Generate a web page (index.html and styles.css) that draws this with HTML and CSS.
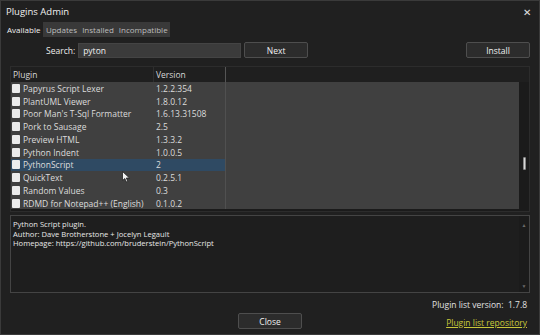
FILE: index.html
```html
<!DOCTYPE html>
<html lang="en">
<head>
    <meta charset="UTF-8">
    <title>Plugins Admin</title>
    <link rel="stylesheet" href="styles.css">
</head>
<body>
    <div class="window">
        <div class="titlebar">
            <span class="title">Plugins Admin</span>
            <span class="close-x">✕</span>
        </div>

        <div class="tabs">
            <span class="tab active">Available</span>
            <div class="tab-strip">
                <span class="tab">Updates</span>
                <span class="tab">Installed</span>
                <span class="tab">Incompatible</span>
            </div>
        </div>

        <div class="search-row">
            <label class="search-label">Search:</label>
            <div class="search-input">pyton</div>
            <button class="btn next-btn">Next</button>
            <div class="spacer"></div>
            <button class="btn install-btn">Install</button>
        </div>

        <div class="list-frame">
            <div class="list-head">
                <div class="col-name">Plugin</div>
                <div class="col-ver">Version</div>
                <div class="col-rest"></div>
            </div>
            <div class="list-body">
                <div class="rows">
                    <div class="row"><span class="col-name"><i class="check"></i>Papyrus Script Lexer</span><span class="col-ver">1.2.2.354</span><span class="col-rest"></span></div>
                    <div class="row"><span class="col-name"><i class="check"></i>PlantUML Viewer</span><span class="col-ver">1.8.0.12</span><span class="col-rest"></span></div>
                    <div class="row"><span class="col-name"><i class="check"></i>Poor Man's T-Sql Formatter</span><span class="col-ver">1.6.13.31508</span><span class="col-rest"></span></div>
                    <div class="row"><span class="col-name"><i class="check"></i>Pork to Sausage</span><span class="col-ver">2.5</span><span class="col-rest"></span></div>
                    <div class="row"><span class="col-name"><i class="check"></i>Preview HTML</span><span class="col-ver">1.3.3.2</span><span class="col-rest"></span></div>
                    <div class="row"><span class="col-name"><i class="check"></i>Python Indent</span><span class="col-ver">1.0.0.5</span><span class="col-rest"></span></div>
                    <div class="row selected"><span class="col-name"><i class="check"></i>PythonScript</span><span class="col-ver">2</span><span class="col-rest"></span></div>
                    <div class="row"><span class="col-name"><i class="check"></i>QuickText</span><span class="col-ver">0.2.5.1</span><span class="col-rest"></span></div>
                    <div class="row"><span class="col-name"><i class="check"></i>Random Values</span><span class="col-ver">0.3</span><span class="col-rest"></span></div>
                    <div class="row"><span class="col-name"><i class="check"></i>RDMD for Notepad++ (English)</span><span class="col-ver">0.1.0.2</span><span class="col-rest"></span></div>
                </div>
                <div class="vscroll">
                    <div class="thumb"></div>
                </div>
                <!-- mouse pointer over the list -->
                <svg class="cursor" width="9" height="12" viewBox="0 0 9 12">
                    <path d="M0.5 0.5 L0.5 9.5 L2.8 7.5 L4.4 11 L5.8 10.4 L4.3 7 L7.5 7 Z" fill="#f2f2f2" stroke="#222" stroke-width="0.8"/>
                </svg>
            </div>
        </div>

        <div class="desc-box">
            <div class="desc-text">
                Python Script plugin.<br>
                Author: Dave Brotherstone + Jocelyn Legault<br>
                Homepage: https://github.com/bruderstein/PythonScript
            </div>
            <div class="desc-scroll">
                <span class="arrow">▲</span>
                <span class="arrow">▼</span>
            </div>
        </div>

        <div class="footer">
            <div class="version-line">Plugin list version:&nbsp;&nbsp;1.7.8</div>
            <div class="footer-row">
                <button class="btn close-btn">Close</button>
                <a class="repo-link" href="#">Plugin list repository</a>
            </div>
        </div>
    </div>
</body>
</html>
```

FILE: styles.css
```css
* {
    margin: 0;
    padding: 0;
    box-sizing: border-box;
}

body {
    font-family: 'Open Sans', 'Noto Sans', 'Liberation Sans', sans-serif;
    background: #202020;
    color: #e6e6e6;
    width: 540px;
    height: 335px;
    overflow: hidden;
}

.window {
    width: 540px;
    height: 335px;
    background: #202020;
    border: 1px solid #3a3a3a;
    display: flex;
    flex-direction: column;
}

.titlebar {
    height: 21px;
    display: flex;
    align-items: center;
    justify-content: space-between;
    padding: 0 8px 0 5px;
}

.title {
    font-size: 9.5px;
    color: #f0f0f0;
}

.close-x {
    font-size: 10px;
    color: #e0e0e0;
}

.tabs {
    display: flex;
    height: 15px;
    padding-left: 5px;
    font-size: 8px;
}

.tab {
    display: flex;
    align-items: center;
    padding: 0 2.5px;
    color: #bdbdbd;
}

.tab.active {
    color: #f2f2f2;
    padding: 0 3px 0 1px;
}

.tab-strip {
    display: flex;
    background: #393939;
}

.search-row {
    display: flex;
    align-items: center;
    height: 16px;
    margin-top: 5px;
    padding: 0 9px 0 45px;
    font-size: 8.5px;
}

.search-label {
    margin-right: 3px;
    color: #ececec;
}

.search-input {
    width: 163px;
    height: 15px;
    background: #3b3b3b;
    border: 1px solid #444;
    padding: 0 4px;
    line-height: 13px;
    color: #f0f0f0;
}

.btn {
    font-family: inherit;
    background: #2c2c2c;
    border: 1px solid #4e4e4e;
    border-radius: 2px;
    color: #f0f0f0;
    font-size: 8.5px;
    height: 16px;
    width: 64px;
}

.next-btn {
    margin-left: 3px;
}

.spacer {
    flex: 1;
}

.list-frame {
    margin: 8px 9px 0 9px;
    height: 146px;
    background: #1b1b1b;
    border: 1px solid #2c2c2c;
    display: flex;
    flex-direction: column;
    font-size: 8.5px;
}

.list-head {
    height: 15px;
    flex: none;
    display: flex;
    align-items: center;
    color: #d6d6d6;
    background: #1f1f1f;
}

.col-name {
    width: 143px;
    padding-left: 2px;
    display: flex;
    align-items: center;
    height: 100%;
    border-right: 1px solid #2e2e2e;
}

.col-ver {
    width: 72px;
    padding-left: 2px;
    display: flex;
    align-items: center;
    height: 100%;
    border-right: 1px solid #555;
}

.col-rest {
    flex: 1;
    height: 100%;
}

.list-body {
    position: relative;
    flex: 1;
    display: flex;
    padding-bottom: 2px;
    overflow: hidden;
}

.rows {
    width: 508px;
    background: #404040;
    overflow: hidden;
}

.row {
    height: 12.75px;
    display: flex;
    align-items: center;
    color: #dcdcdc;
}

.row .col-name {
    border-right: none;
    padding-left: 1px;
}

.row .col-ver {
    border-right: 1px solid #505050;
}

.row.selected .col-name,
.row.selected .col-ver {
    background: #2f4a63;
}

.check {
    width: 8px;
    height: 9px;
    background: #ececec;
    border-radius: 1px;
    margin-right: 3px;
}

.vscroll {
    flex: 1;
    display: flex;
    justify-content: center;
    padding-top: 75px;
}

.thumb {
    width: 3px;
    height: 13px;
    background: #d8d8d8;
    border: 1px solid #888;
    border-radius: 1px;
}

.cursor {
    position: absolute;
    left: 111px;
    top: 89px;
}

.desc-box {
    margin: 3px 9px 0 9px;
    height: 78px;
    border: 1px solid #444;
    background: #1e1e1e;
    display: flex;
}

.desc-text {
    flex: 1;
    padding: 4px 2px;
    font-size: 7.6px;
    line-height: 9.6px;
    color: #e8e8e8;
}

.desc-scroll {
    width: 10px;
    display: flex;
    flex-direction: column;
    justify-content: space-between;
    align-items: center;
    padding: 6px 0 3px;
    background: #1b1b1b;
}

.arrow {
    font-size: 5px;
    color: #6a6a6a;
}

.footer {
    flex: 1;
    padding: 6px 12px 0 9px;
    font-size: 8.5px;
}

.version-line {
    text-align: right;
    color: #e0e0e0;
    height: 12px;
}

.footer-row {
    display: flex;
    align-items: center;
    justify-content: flex-end;
    position: relative;
    margin-top: 2px;
    height: 17px;
}

.close-btn {
    position: absolute;
    left: 228px;
    top: 0;
}

.repo-link {
    color: #c9c83a;
    text-decoration: underline;
    font-size: 8.5px;
    padding-top: 2px;
}
```
